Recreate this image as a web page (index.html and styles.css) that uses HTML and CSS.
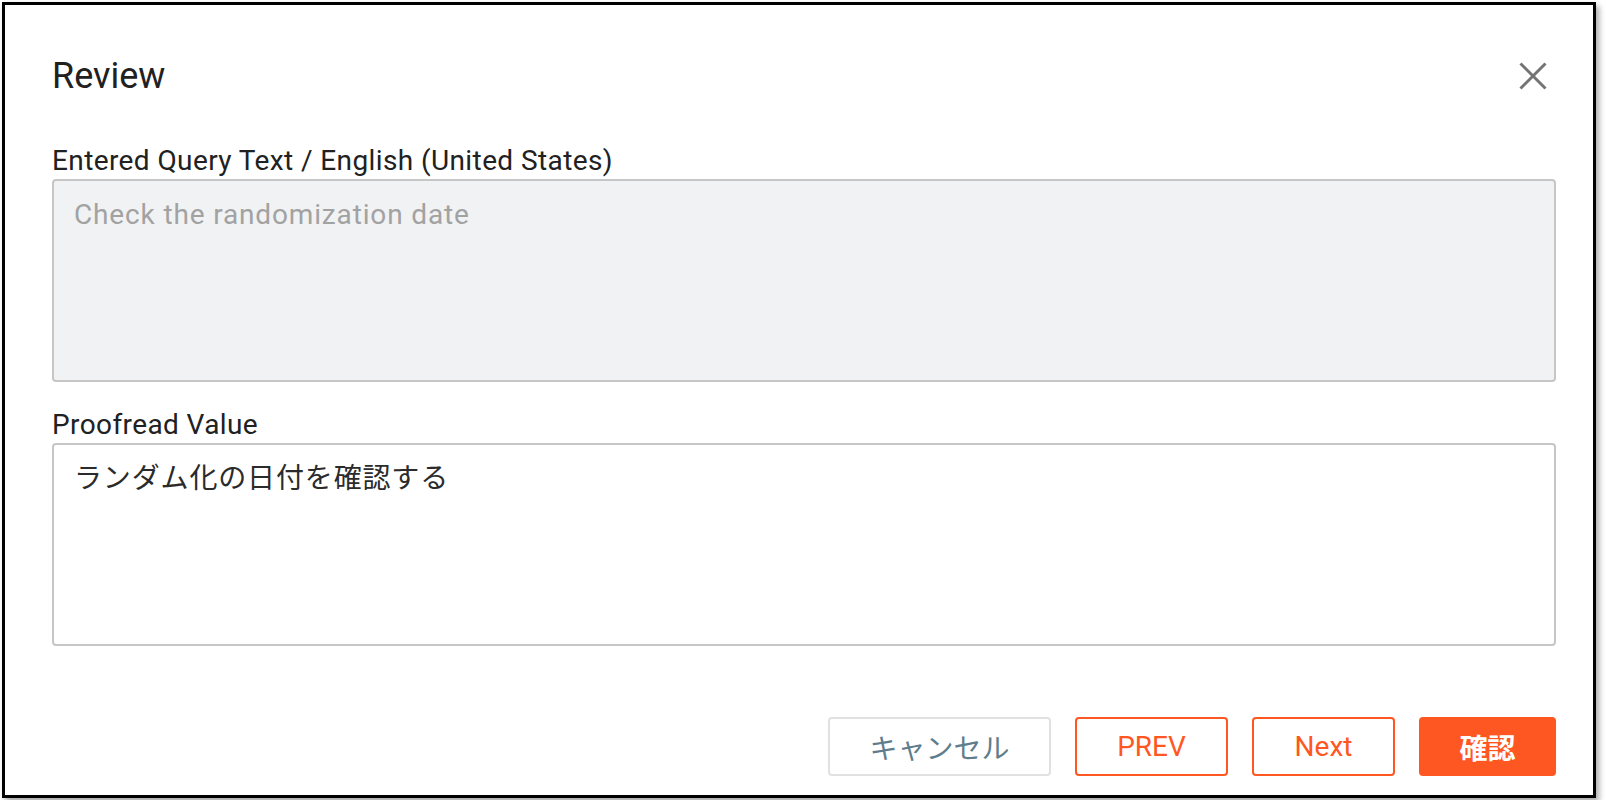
FILE: index.html
```html
<!DOCTYPE html>
<html lang="ja">
<head>
    <meta charset="UTF-8">
    <meta name="viewport" content="width=device-width, initial-scale=1.0">
    <title>Review</title>
    <link rel="stylesheet" href="styles.css">
</head>
<body>
    <div class="dialog">
        <div class="dialog-header">
            <h1>Review</h1>
            <button class="close-btn" aria-label="Close">
                <svg width="28" height="28" viewBox="0 0 28 28">
                    <path d="M1.5 1.5 L26.5 26.5 M26.5 1.5 L1.5 26.5" stroke="#747474" stroke-width="3" fill="none"/>
                </svg>
            </button>
        </div>

        <div class="field">
            <label for="query">Entered Query Text / English (United States)</label>
            <textarea id="query" class="readonly" placeholder="Check the randomization date" disabled></textarea>
        </div>

        <div class="field">
            <label for="proofread">Proofread Value</label>
            <textarea id="proofread">ランダム化の日付を確認する</textarea>
        </div>

        <div class="actions">
            <button class="btn btn-cancel">キャンセル</button>
            <button class="btn btn-outline btn-prev">PREV</button>
            <button class="btn btn-outline btn-next">Next</button>
            <button class="btn btn-primary">確認</button>
        </div>
    </div>
</body>
</html>
```

FILE: styles.css
```css
body {
    margin: 0;
    padding: 2px;
    background-color: #fff;
    font-family: Roboto, "Noto Sans CJK JP", sans-serif;
    color: #212121;
}
.dialog {
    box-sizing: border-box;
    width: 1594px;
    height: 796px;
    border: 3px solid #000;
    background: #fff;
    box-shadow: 3px 4px 6px rgba(0, 0, 0, 0.35);
    padding: 51px 37px 19px 47px;
    display: flex;
    flex-direction: column;
}
.dialog-header {
    display: flex;
    align-items: center;
    justify-content: space-between;
    height: 40px;
    margin-bottom: 49px;
}
.dialog-header h1 {
    margin: 0;
    font-size: 36px;
    line-height: 40px;
    font-weight: 400;
    color: #212121;
}
.close-btn {
    background: none;
    border: none;
    padding: 0;
    margin-right: 9px;
    width: 28px;
    height: 28px;
    cursor: pointer;
}
.close-btn svg {
    display: block;
}
.field {
    margin-bottom: 27px;
}
.field label {
    display: block;
    font-size: 28px;
    line-height: 31px;
    letter-spacing: 0.4px;
    margin-bottom: 3px;
    color: #212121;
}
.field textarea {
    display: block;
    box-sizing: border-box;
    width: 100%;
    height: 203px;
    margin: 0;
    padding: 14px 20px 12px;
    border: 2px solid #c6c6c6;
    border-radius: 4px;
    background: #fff;
    font-family: Roboto, "Noto Sans CJK JP", sans-serif;
    font-size: 28px;
    line-height: 40px;
    letter-spacing: 0.85px;
    color: #2b2b2b;
    resize: none;
    outline: none;
}
.field textarea.readonly {
    background: #f1f2f4;
}
.field textarea::placeholder {
    color: #a2a2a2;
}
.actions {
    margin-top: auto;
    display: flex;
    justify-content: flex-end;
    gap: 24px;
}
.btn {
    box-sizing: border-box;
    height: 59px;
    padding: 0;
    border: 2px solid #ff5722;
    border-radius: 4px;
    background: #fff;
    color: #ff5722;
    font-family: Roboto, "Noto Sans CJK JP", sans-serif;
    font-size: 28px;
    cursor: pointer;
}
.btn-cancel {
    width: 223px;
    border-color: #e1e1e1;
    color: #5f7d8c;
}
.btn-prev {
    width: 153px;
}
.btn-next {
    width: 143px;
}
.btn-primary {
    width: 137px;
    background: #ff5722;
    color: #fff;
    font-weight: bold;
}
```
